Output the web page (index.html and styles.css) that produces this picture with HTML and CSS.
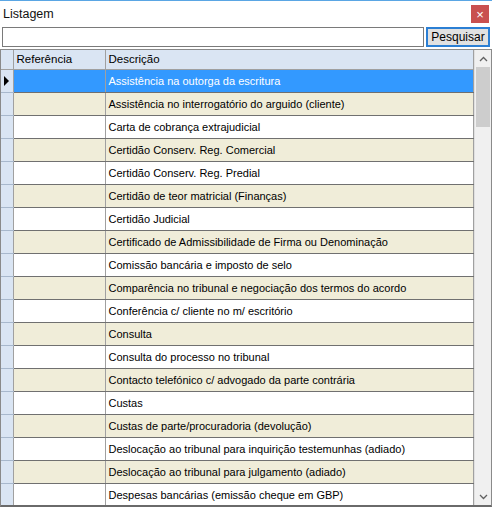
FILE: index.html
```html
<!DOCTYPE html>
<html>
<head>
<meta charset="utf-8">
<link rel="stylesheet" href="styles.css">
</head>
<body>
<div class="window">
  <div class="titlebar">
    <span class="title">Listagem</span>
    <span class="close">×</span>
  </div>
  <div class="search">
    <input class="search-input" type="text">
    <button class="search-btn">Pesquisar</button>
  </div>
  <div class="grid">
    <div class="table-wrap">
      <table class="table">
        <thead>
          <tr><th class="rh"></th><th class="ref">Referência</th><th class="desc">Descrição</th></tr>
        </thead>
        <tbody>
          <tr class="sel"><td class="rh"><span class="arrow"></span></td><td></td><td>Assistência na outorga da escritura</td></tr>
          <tr class="alt"><td class="rh"></td><td></td><td>Assistência no interrogatório do arguido (cliente)</td></tr>
          <tr><td class="rh"></td><td></td><td>Carta de cobrança extrajudicial</td></tr>
          <tr class="alt"><td class="rh"></td><td></td><td>Certidão Conserv. Reg. Comercial</td></tr>
          <tr><td class="rh"></td><td></td><td>Certidão Conserv. Reg. Predial</td></tr>
          <tr class="alt"><td class="rh"></td><td></td><td>Certidão de teor matricial (Finanças)</td></tr>
          <tr><td class="rh"></td><td></td><td>Certidão Judicial</td></tr>
          <tr class="alt"><td class="rh"></td><td></td><td>Certificado de Admissibilidade de Firma ou Denominação</td></tr>
          <tr><td class="rh"></td><td></td><td>Comissão bancária e imposto de selo</td></tr>
          <tr class="alt"><td class="rh"></td><td></td><td>Comparência no tribunal e negociação dos termos do acordo</td></tr>
          <tr><td class="rh"></td><td></td><td>Conferência c/ cliente no m/ escritório</td></tr>
          <tr class="alt"><td class="rh"></td><td></td><td>Consulta</td></tr>
          <tr><td class="rh"></td><td></td><td>Consulta do processo no tribunal</td></tr>
          <tr class="alt"><td class="rh"></td><td></td><td>Contacto telefónico c/ advogado da parte contrária</td></tr>
          <tr><td class="rh"></td><td></td><td>Custas</td></tr>
          <tr class="alt"><td class="rh"></td><td></td><td>Custas de parte/procuradoria (devolução)</td></tr>
          <tr><td class="rh"></td><td></td><td>Deslocação ao tribunal para inquirição testemunhas (adiado)</td></tr>
          <tr class="alt"><td class="rh"></td><td></td><td>Deslocação ao tribunal para julgamento (adiado)</td></tr>
          <tr><td class="rh"></td><td></td><td>Despesas bancárias (emissão cheque em GBP)</td></tr>
        </tbody>
      </table>
    </div>
    <div class="scrollbar">
      <div class="sb-btn">
        <svg width="9" height="6" viewBox="0 0 9 6"><path d="M1 5 L4.5 1.5 L8 5" fill="none" stroke="#606060" stroke-width="1.3"/></svg>
      </div>
      <div class="sb-track"><div class="sb-thumb"></div></div>
      <div class="sb-btn">
        <svg width="9" height="6" viewBox="0 0 9 6"><path d="M1 1 L4.5 4.5 L8 1" fill="none" stroke="#606060" stroke-width="1.3"/></svg>
      </div>
    </div>
  </div>
</div>
</body>
</html>
```
FILE: styles.css
```css
* { box-sizing: border-box; }
html, body { margin: 0; padding: 0; }
body {
  width: 492px;
  height: 507px;
  overflow: hidden;
  background: #ffffff;
  font-family: "Liberation Sans", Arial, sans-serif;
  font-size: 11px;
  color: #000;
}
.window {
  width: 492px;
  height: 507px;
  border-top: 1px solid #5aa6e4;
  display: flex;
  flex-direction: column;
}
.titlebar {
  height: 26px;
  display: flex;
  align-items: center;
  justify-content: space-between;
  padding: 0 3px 0 3px;
}
.title {
  font-size: 12.5px;
  margin-top: 0;
  color: #111;
}
.close {
  width: 18px;
  height: 18px;
  background: #c9504f;
  color: #fff;
  font-size: 13px;
  display: flex;
  align-items: center;
  justify-content: center;
  margin-right: 0;
  margin-top: 0;
  line-height: 1;
}
.search {
  display: flex;
  gap: 2px;
  padding: 0 2px;
  height: 20px;
}
.search-input {
  width: 422px;
  height: 20px;
  margin: 0;
  border: 1px solid #7a7a7a;
  padding: 0 2px;
  font: inherit;
  background: #fff;
}
.search-btn {
  width: 64px;
  height: 20px;
  margin: 0;
  padding: 0;
  border: 2px solid #2b7fd4;
  background: #e1e1e1;
  font-family: "Liberation Sans", Arial, sans-serif;
  font-size: 12px;
  color: #000;
}
.grid {
  margin-top: 2px;
  margin-left: 0;
  width: 492px;
  flex: 1;
  display: flex;
  border: 1px solid #8a8a8a;
  border-right: 1px solid #8a8a8a;
  border-bottom: 2px solid #6a6a6a;
  overflow: hidden;
}
.table-wrap {
  flex: 1;
  overflow: hidden;
}
.table {
  border-collapse: collapse;
  table-layout: fixed;
  width: 100%;
}
.table th, .table td {
  padding: 0 3px;
  text-align: left;
  font-weight: normal;
  white-space: nowrap;
  overflow: hidden;
  border-right: 1px solid #a0a0a0;
  border-bottom: 1px solid #707070;
}
.table th {
  height: 19px;
  background: #dae5f3;
  border-bottom: 1px solid #a0a0a0;
  border-right: 1px solid #a0a0a0;
  font-size: 11.5px;
}
.table th.rh { width: 12px; }
.table th.ref { width: 92px; }
.table td {
  height: 23px;
  background: #ffffff;
}
.table td.rh {
  background: #dae5f3;
  border-bottom: 1px solid #a8b8cc;
  padding: 0;
  position: relative;
}
.table tr.alt td { background: #f0edd9; }
.table tr.alt td.rh { background: #dae5f3; }
.table tr.sel td { background: #3399ff; color: #fff; }
.table tr.sel td.rh { background: #dae5f3; }
.arrow {
  position: absolute;
  left: 3px;
  top: 6px;
  width: 0;
  height: 0;
  border-top: 5px solid transparent;
  border-bottom: 5px solid transparent;
  border-left: 5px solid #000;
}
.scrollbar {
  width: 17px;
  background: #f0f0f0;
  display: flex;
  flex-direction: column;
  border-left: 1px solid #e0e0e0;
}
.sb-btn {
  height: 17px;
  display: flex;
  align-items: center;
  justify-content: center;
}
.sb-track {
  flex: 1;
  padding: 0 1px;
}
.sb-thumb {
  height: 60px;
  background: #cdcdcd;
}
```
